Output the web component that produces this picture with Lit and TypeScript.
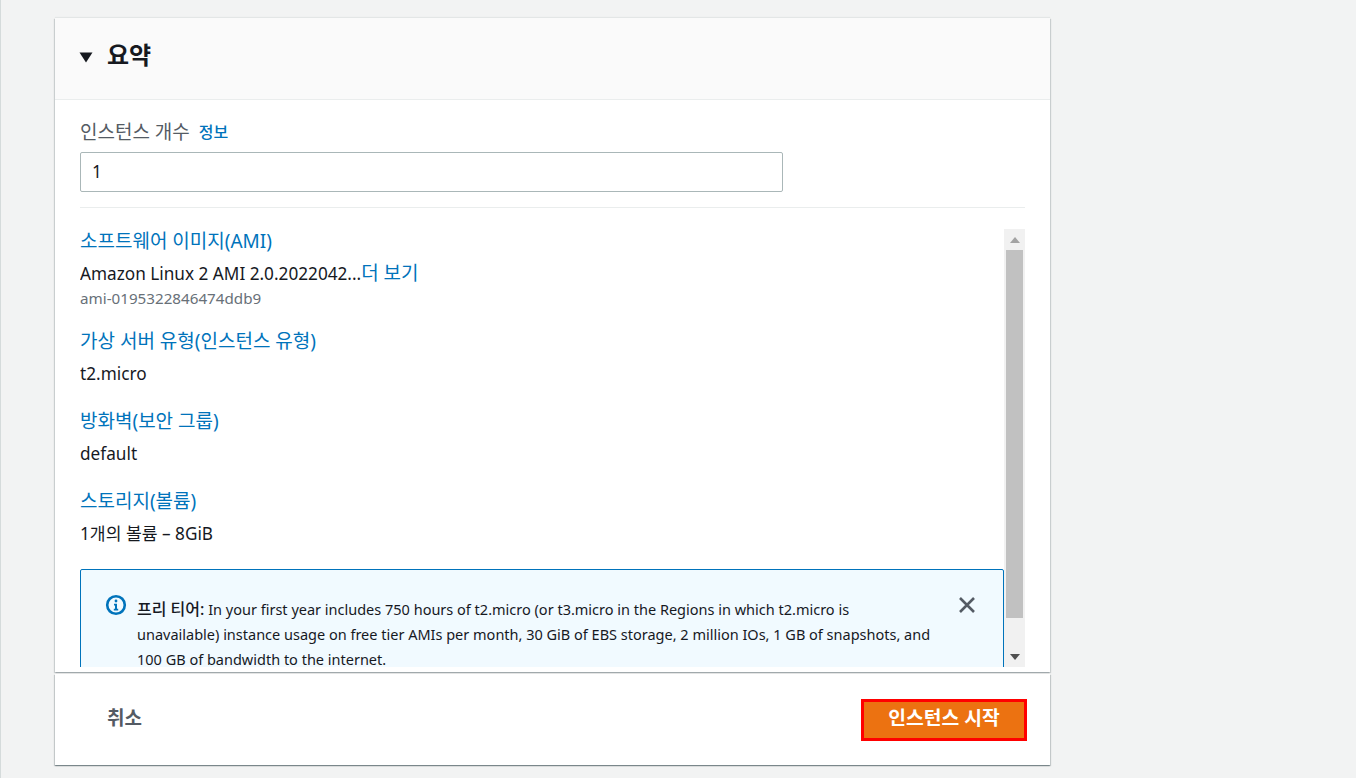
import { LitElement, html, css } from "lit";
import { customElement } from "lit/decorators.js";

const summary = [
  { title: "가상 서버 유형(인스턴스 유형)", value: "t2.micro" },
  { title: "방화벽(보안 그룹)", value: "default" },
  { title: "스토리지(볼륨)", value: "1개의 볼륨 – 8GiB" },
];

@customElement("app-root")
export class AppRoot extends LitElement {
  static styles = css`
    :host {
      display: block;
      height: 778px;
      overflow: hidden;
      box-sizing: border-box;
      background: #f2f3f3;
      border-left: 1px solid #d5dbdb;
      padding: 18px 0 0 54px;
      font-family: "Noto Sans", "Noto Sans CJK KR", sans-serif;
      font-size: 17.2px;
      color: #16191f;
    }

    .card {
      width: 995px;
      background: #fff;
      box-shadow: 0 1px 1px 0 rgba(0, 28, 36, 0.3), 1px 1px 1px 0 rgba(0, 28, 36, 0.15), -1px 1px 1px 0 rgba(0, 28, 36, 0.15);
    }

    .main {
      box-shadow: 0 1px 1px 0 rgba(0, 28, 36, 0.08), 1px 1px 1px 0 rgba(0, 28, 36, 0.15), -1px 1px 1px 0 rgba(0, 28, 36, 0.15), 0 -1px 1px 0 rgba(0, 28, 36, 0.06);
    }

    .header {
      height: 82px;
      box-sizing: border-box;
      background: #fafafa;
      border-bottom: 1px solid #eaeded;
      padding: 0 0 10px 24px;
      display: flex;
      align-items: center;
      gap: 14px;
      font-size: 24px;
      font-weight: 700;
    }

    .caret {
      margin-top: 8px;
    }

    .body {
      height: 572px;
      box-sizing: border-box;
      padding: 20px 25px 0;
      display: flex;
      flex-direction: column;
    }

    .label {
      height: 24px;
      line-height: 24px;
      font-size: 19px;
      color: #545b64;
      display: flex;
      align-items: center;
      gap: 9px;
    }

    .label a {
      font-size: 16px;
      color: #0073bb;
      font-weight: 500;
    }

    .input {
      width: 703px;
      height: 40px;
      box-sizing: border-box;
      margin-top: 8px;
      border: 1px solid #aab7b8;
      border-radius: 2px;
      padding: 0 0 2px 11px;
      display: flex;
      align-items: center;
    }

    hr {
      margin: 15px 0 21px;
      border: 0;
      border-top: 1px solid #eaeded;
    }

    .scroller {
      height: 438px;
      display: flex;
      overflow: hidden;
    }

    .content {
      width: 924px;
      overflow: hidden;
      line-height: 24px;
    }

    .title {
      color: #0073bb;
      font-size: 19px;
    }

    .ami {
      margin-top: 8px;
      height: 24px;
    }

    .ami a {
      color: #0073bb;
      font-size: 19px;
    }

    .ami-id {
      font-size: 15.2px;
      color: #687078;
      height: 20px;
      line-height: 20px;
      margin-top: 3px;
    }

    .item {
      margin-top: 23px;
    }

    .ami-id + .item {
      margin-top: 21px;
    }

    .value {
      margin-top: 9px;
    }

    .notice {
      margin-top: 23px;
      height: 140px;
      box-sizing: border-box;
      border: 1px solid #0073bb;
      border-radius: 2px;
      background: #f1faff;
      padding: 27px 27px 0 24px;
      display: flex;
      font-size: 14.5px;
      line-height: 25px;
    }

    .notice-icon {
      flex: none;
      width: 22px;
      height: 22px;
      margin: -3px 10px 0 0;
    }

    .notice-text {
      flex: none;
      white-space: nowrap;
    }

    .notice-text b {
      font-size: 16px;
      font-weight: 500;
    }

    .close {
      flex: none;
      width: 18px;
      height: 18px;
      margin: -1px 0 0 auto;
    }

    .bar {
      width: 21px;
      background: #f1f1f1;
      display: flex;
      flex-direction: column;
    }

    .arrow {
      height: 21px;
      display: flex;
      align-items: center;
      justify-content: center;
    }

    .thumb {
      height: 368px;
      margin: 0 2px;
      background: #c1c1c1;
    }

    .spacer {
      flex: 1;
    }

    .footer {
      margin-top: 2px;
      height: 91px;
      box-sizing: border-box;
      padding: 0 23px 6px 52px;
      display: flex;
      align-items: center;
      justify-content: space-between;
      font-size: 19px;
    }

    .cancel {
      font-weight: 700;
      color: #545b64;
    }

    .start {
      width: 166px;
      height: 42px;
      margin-top: 6px;
      box-sizing: border-box;
      border: 3px solid #ff0000;
      background: #ec7211;
      color: #fff;
      font-size: 19.3px;
      font-weight: 700;
      display: flex;
      justify-content: center;
      line-height: 32px;
    }
  `;

  render() {
    return html`
      <section class="card main">
        <div class="header">
          <svg class="caret" width="14" height="11" viewBox="0 0 14 11"><path d="M0.5 0.5h13L7 10.5z" fill="#16191f"></path></svg>
          <span>요약</span>
        </div>
        <div class="body">
          <div class="label">인스턴스 개수 <a>정보</a></div>
          <div class="input">1</div>
          <hr />
          <div class="scroller">
            <div class="content">
              <div class="title">소프트웨어 이미지(AMI)</div>
              <div class="ami">Amazon Linux 2 AMI 2.0.2022042...<a>더 보기</a></div>
              <div class="ami-id">ami-0195322846474ddb9</div>
              ${summary.map(
                (s) => html`
                  <div class="item">
                    <div class="title">${s.title}</div>
                    <div class="value">${s.value}</div>
                  </div>
                `
              )}
              <div class="notice">
                <svg class="notice-icon" viewBox="0 0 22 22">
                  <circle cx="11" cy="11" r="8.8" fill="none" stroke="#0073bb" stroke-width="2.6"></circle>
                  <circle cx="11" cy="7" r="1.4" fill="#0073bb"></circle>
                  <path d="M9 9.8h3v5h1.2v1.6H8.8v-1.6H10v-3.4H9z" fill="#0073bb"></path>
                </svg>
                <div class="notice-text">
                  <b>프리 티어:</b> In your first year includes 750 hours of t2.micro (or t3.micro in the Regions in which t2.micro is<br />
                  unavailable) instance usage on free tier AMIs per month, 30 GiB of EBS storage, 2 million IOs, 1 GB of snapshots, and<br />
                  100 GB of bandwidth to the internet.
                </div>
                <svg class="close" viewBox="0 0 18 18">
                  <path d="M2 2l14 14M16 2L2 16" stroke="#545b64" stroke-width="2.6" fill="none"></path>
                </svg>
              </div>
            </div>
            <div class="bar">
              <div class="arrow"><svg width="10" height="6" viewBox="0 0 10 6"><path d="M5 0l5 6H0z" fill="#a3a3a3"></path></svg></div>
              <div class="thumb"></div>
              <div class="spacer"></div>
              <div class="arrow"><svg width="10" height="6" viewBox="0 0 10 6"><path d="M0 0h10L5 6z" fill="#505050"></path></svg></div>
            </div>
          </div>
        </div>
      </section>
      <section class="card footer">
        <span class="cancel">취소</span>
        <div class="start">인스턴스 시작</div>
      </section>
    `;
  }
}
